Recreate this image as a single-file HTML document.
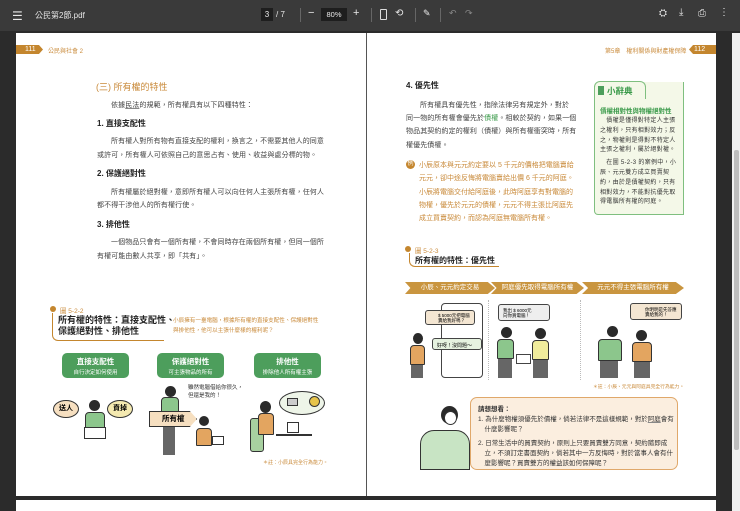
<!DOCTYPE html>
<html><head><meta charset="utf-8"><style>
*{margin:0;padding:0;box-sizing:border-box}
body{width:740px;height:511px;overflow:hidden;background:#2b2b2b;font-family:"Liberation Sans","Noto Sans CJK TC",sans-serif;position:relative}
.a{position:absolute;white-space:nowrap}
.tb{position:absolute;left:0;top:0;width:740px;height:31px;background:#3a3a3a;color:#e8e8e8}
.pg{position:absolute;background:#fff}
.t{font-size:7px;color:#444;letter-spacing:0.1px}
.h{font-size:8px;font-weight:bold;color:#222}
.o{color:#c98a3a}
.g{background:#4d9e5c;color:#fff;border-radius:5px;text-align:center;position:absolute}
.hd{position:absolute;border-radius:50%;background:#2a2a2a}
.bd{position:absolute;border-radius:4px 4px 1px 1px;border:1px solid #333}
.arr{position:absolute;height:12px;background:#c9953f;color:#fff;font-size:6.5px;line-height:12px;text-align:center;clip-path:polygon(0 0,92% 0,100% 50%,92% 100%,0 100%,6% 50%)}
u{text-decoration:underline;text-decoration-color:#888}
</style></head><body>
<div class="tb">
 <div class="a" style="left:12px;top:9px;font-size:12px">☰</div>
 <div class="a" style="left:35px;top:10px;font-size:8px">公民第2節.pdf</div>
 <div class="a" style="left:261px;top:8px;width:12px;height:13px;background:#1e1e1e;font-size:8px;text-align:center;line-height:13px">3</div>
 <div class="a" style="left:276px;top:10px;font-size:8px">/ 7</div>
 <div class="a" style="left:300px;top:8px;width:1px;height:14px;background:#666"></div>
 <div class="a" style="left:308px;top:7px;font-size:11px">−</div>
 <div class="a" style="left:321px;top:8px;width:26px;height:13px;background:#1e1e1e;font-size:7.5px;text-align:center;line-height:13px">80%</div>
 <div class="a" style="left:353px;top:7px;font-size:11px">+</div>
 <div class="a" style="left:371px;top:8px;width:1px;height:14px;background:#666"></div>
 <div class="a" style="left:380px;top:9px;width:7px;height:11px;border:1px solid #ddd;border-radius:1px"></div>
 <div class="a" style="left:395px;top:8px;font-size:10px">⟲</div>
 <div class="a" style="left:415px;top:8px;width:1px;height:14px;background:#666"></div>
 <div class="a" style="left:423px;top:8px;font-size:9px">✎</div>
 <div class="a" style="left:440px;top:8px;width:1px;height:14px;background:#666"></div>
 <div class="a" style="left:449px;top:8px;font-size:9px;color:#888">↶</div>
 <div class="a" style="left:465px;top:8px;font-size:9px;color:#888">↷</div>
 <div class="a" style="left:659px;top:8px;font-size:10px">⛭</div>
 <div class="a" style="left:679px;top:7px;font-size:10px">⤓</div>
 <div class="a" style="left:698px;top:8px;font-size:10px">⎙</div>
 <div class="a" style="left:719px;top:7px;font-size:10px">⋮</div>
</div>
<div class="a" style="left:732px;top:33px;width:8px;height:478px;background:#f0f0f0"></div>
<div class="a" style="left:734px;top:150px;width:5px;height:300px;background:#bdbdbd;border-radius:2px"></div>

<div class="pg" style="left:16px;top:33px;width:700px;height:463px"></div>
<div class="a" style="left:366px;top:33px;width:1px;height:463px;background:#555"></div>
<div class="pg" style="left:16px;top:500px;width:700px;height:11px"></div>

<!-- headers -->
<div class="a" style="left:16px;top:45px;width:27px;height:9px;background:#c4862e;clip-path:polygon(0 0,85% 0,100% 50%,85% 100%,0 100%);color:#fff;font-size:7px;line-height:9px;padding-left:9px">111</div>
<div class="a o" style="left:48px;top:46px;font-size:6px">公民與社會 2</div>
<div class="a o" style="left:605px;top:46px;font-size:6px">第5章　權利關係與財產權保障</div>
<div class="a" style="left:689px;top:45px;width:27px;height:9px;background:#c4862e;clip-path:polygon(15% 0,100% 0,100% 100%,15% 100%,0 50%);color:#fff;font-size:7px;line-height:9px;padding-left:5px">112</div>

<!-- left page text -->
<div class="a o" style="left:96px;top:80px;font-size:9px">(三) 所有權的特性</div>
<div class="a t" style="left:111px;top:100px">依據<u>民法</u>的規範，所有權具有以下四種特性：</div>
<div class="a h" style="left:97px;top:118px">1. 直接支配性</div>
<div class="a t" style="left:111px;top:136px">所有權人對所有物有直接支配的權利，換言之，不需要其他人的同意</div>
<div class="a t" style="left:97px;top:150px">或許可，所有權人可依照自己的意思占有、使用、收益與處分標的物。</div>
<div class="a h" style="left:97px;top:168px">2. 保護絕對性</div>
<div class="a t" style="left:111px;top:187px">所有權屬於絕對權，意即所有權人可以向任何人主張所有權，任何人</div>
<div class="a t" style="left:97px;top:200px">都不得干涉他人的所有權行使。</div>
<div class="a h" style="left:97px;top:219px">3. 排他性</div>
<div class="a t" style="left:111px;top:237px">一個物品只會有一個所有權，不會同時存在兩個所有權，但同一個所</div>
<div class="a t" style="left:97px;top:251px">有權可能由數人共享，即「共有」。</div>

<!-- fig 5-2-2 -->
<div class="a" style="left:50px;top:306px;width:6px;height:6px;border-radius:50%;background:#c4862e"></div>
<div class="a o" style="left:60px;top:305px;font-size:6.5px">圖 5-2-2</div>
<div class="a" style="left:58px;top:315px;font-size:9px;font-weight:bold;color:#222;line-height:11px">所有權的特性：直接支配性、<br>保護絕對性、排他性</div>
<div class="a" style="left:52px;top:313px;width:112px;height:28px;border-left:1px solid #c4862e;border-bottom:1px solid #c4862e;border-radius:0 0 0 6px"></div>
<div class="a o" style="left:173px;top:316px;font-size:5.6px;line-height:10px">小辰擁有一臺電腦，根據所有權的直接支配性、保護絕對性<br>與排他性，他可以主張什麼樣的權利呢？</div>
<div class="g" style="left:62px;top:353px;width:67px;height:25px;font-size:7.5px;font-weight:bold;padding-top:3px">直接支配性<div style="font-size:5.5px;font-weight:normal;margin-top:1px">自行決定如何使用</div></div>
<div class="g" style="left:157px;top:353px;width:67px;height:25px;font-size:7.5px;font-weight:bold;padding-top:3px">保護絕對性<div style="font-size:5.5px;font-weight:normal;margin-top:1px">可主張物品的所有</div></div>
<div class="g" style="left:254px;top:353px;width:67px;height:25px;font-size:7.5px;font-weight:bold;padding-top:3px">排他性<div style="font-size:5.5px;font-weight:normal;margin-top:1px">排除他人所有權主張</div></div>
<!-- illus 1 -->
<div class="a" style="left:53px;top:400px;width:26px;height:18px;border-radius:50%;background:#f6dfc0;border:1px solid #333;font-size:7px;font-weight:bold;text-align:center;line-height:16px">送人</div>
<div class="a" style="left:107px;top:400px;width:26px;height:18px;border-radius:50%;background:#f4e9b0;border:1px solid #333;font-size:7px;font-weight:bold;text-align:center;line-height:16px">賣掉</div>
<div class="hd" style="left:89px;top:400px;width:11px;height:11px"></div>
<div class="bd" style="left:85px;top:412px;width:20px;height:20px;background:#8cc68c"></div>
<div class="a" style="left:84px;top:427px;width:22px;height:12px;background:#fff;border:1px solid #333"></div>
<!-- illus 2 -->
<div class="a o" style="left:188px;top:384px;font-size:5.5px;color:#333;line-height:8px">雖然電腦借給你很久，<br>但還是我的！</div>
<div class="hd" style="left:165px;top:386px;width:11px;height:11px"></div>
<div class="bd" style="left:161px;top:397px;width:18px;height:24px;background:#8cc68c"></div>
<div class="a" style="left:149px;top:411px;width:48px;height:16px;background:#f6dfc0;border:1px solid #333;clip-path:polygon(0 0,85% 0,100% 50%,85% 100%,0 100%);font-size:7.5px;font-weight:bold;line-height:14px;padding-left:12px">所有權</div>
<div class="a" style="left:163px;top:427px;width:12px;height:28px;background:#666"></div>
<div class="hd" style="left:199px;top:416px;width:10px;height:10px"></div>
<div class="bd" style="left:196px;top:428px;width:16px;height:18px;background:#e3a560"></div>
<div class="a" style="left:212px;top:436px;width:12px;height:9px;background:#fff;border:1px solid #333"></div>
<!-- illus 3 -->
<div class="a" style="left:279px;top:391px;width:46px;height:24px;border-radius:50%;border:1px solid #333;background:#eef5e8"></div>
<div class="a" style="left:287px;top:398px;width:11px;height:8px;border:1px solid #333;background:#ccc"></div>
<div class="a" style="left:309px;top:396px;width:11px;height:11px;border-radius:50%;background:#e6c44a;border:1px solid #333"></div>
<div class="a" style="left:250px;top:418px;width:14px;height:34px;background:#a8d0a0;border:1px solid #333;border-radius:3px"></div>
<div class="hd" style="left:260px;top:401px;width:11px;height:12px"></div>
<div class="bd" style="left:258px;top:413px;width:16px;height:22px;background:#e3a560"></div>
<div class="a" style="left:276px;top:434px;width:36px;height:2px;background:#333"></div>
<div class="a" style="left:287px;top:422px;width:12px;height:11px;background:#fff;border:1px solid #333"></div>
<div class="a o" style="left:263px;top:459px;font-size:5px">＊註：小辰具完全行為能力。</div>

<!-- right page -->
<div class="a h" style="left:406px;top:80px">4. 優先性</div>
<div class="a t" style="left:420px;top:100px">所有權具有優先性，指除法律另有規定外，對於</div>
<div class="a t" style="left:406px;top:113px">同一物的所有權會優先於<span style="color:#3a9a4a">債權</span>。相較於契約，如果一個</div>
<div class="a t" style="left:406px;top:126px">物品其契約約定的權利（債權）與所有權衝突時，所有</div>
<div class="a t" style="left:406px;top:140px">權優先債權。</div>
<div class="a" style="left:406px;top:160px;width:9px;height:9px;border-radius:50%;background:#c4862e;color:#fff;font-size:6px;text-align:center;line-height:9px">例</div>
<div class="a o" style="left:419px;top:159px;font-size:7px;line-height:13.3px">小辰原本與元元約定要以 5 千元的價格把電腦賣給<br>元元，卻中途反悔將電腦賣給出價 6 千元的阿庭。<br>小辰將電腦交付給阿庭後，此時阿庭享有對電腦的<br>物權，優先於元元的債權，元元不得主張比阿庭先<br>成立買賣契約，而認為阿庭無電腦所有權。</div>
<!-- dictionary -->
<div class="a" style="left:594px;top:82px;width:90px;height:133px;background:#f4f8e8;border:1px solid #7fbf7f;border-radius:6px 0 0 4px;border-top:none"></div>
<div class="a" style="left:594px;top:81px;width:52px;height:18px;border:1px solid #7fbf7f;border-bottom:none;border-radius:6px 6px 0 0;background:#f4f8e8"></div>
<div class="a" style="left:598px;top:86px;width:6px;height:9px;background:#4d9e5c"></div>
<div class="a" style="left:607px;top:85px;font-size:8.5px;font-weight:bold;color:#3a9a4a">小辭典</div>
<div class="a" style="left:600px;top:105px;font-size:6.5px;font-weight:bold;color:#3a9a4a">債權相對性與物權絕對性</div>
<div class="a" style="left:600px;top:117px;font-size:6px;color:#333;line-height:9.8px;white-space:normal;width:79px;letter-spacing:0.3px">　債權是僅得對特定人主張之權利，只有相對效力；反之，物權則是得對不特定人主張之權利，屬於絕對權。<div style="height:3px"></div>　在圖 5-2-3 的案例中，小辰、元元雙方成立買賣契約，由於是債權契約，只有相對效力，不能對抗優先取得電腦所有權的阿庭。</div>
<!-- fig 5-2-3 -->
<div class="a" style="left:405px;top:246px;width:6px;height:6px;border-radius:50%;background:#c4862e"></div>
<div class="a o" style="left:415px;top:245px;font-size:6.5px">圖 5-2-3</div>
<div class="a" style="left:415px;top:255px;font-size:8px;font-weight:bold;color:#222">所有權的特性：優先性</div>
<div class="a" style="left:409px;top:253px;width:90px;height:14px;border-left:1px solid #c4862e;border-bottom:1px solid #c4862e;border-radius:0 0 0 6px"></div>
<div class="arr" style="left:405px;top:282px;width:90px">小辰、元元約定交易</div>
<div class="arr" style="left:491px;top:282px;width:93px">阿庭優先取得電腦所有權</div>
<div class="arr" style="left:582px;top:282px;width:102px">元元不得主張電腦所有權</div>
<div class="a" style="left:441px;top:303px;width:42px;height:75px;border:1.5px solid #444;border-radius:4px"></div>
<div class="a" style="left:425px;top:310px;width:50px;height:15px;background:#f4e6d2;border:1px solid #444;border-radius:3px;font-size:4.5px;padding:2px 0 0 12px;line-height:5px">$ 5000元把電腦<br>賣給我好嗎？</div>
<div class="a" style="left:432px;top:338px;width:50px;height:12px;background:#e6f2e0;border:1px solid #444;border-radius:3px;font-size:5px;padding:3px 0 0 4px">好呀！沒問題～</div>
<div class="hd" style="left:413px;top:333px;width:10px;height:11px"></div>
<div class="bd" style="left:410px;top:345px;width:15px;height:20px;background:#e3a560"></div>
<div class="a" style="left:411px;top:365px;width:12px;height:13px;background:#666"></div>
<div class="a" style="left:488px;top:300px;width:1px;height:80px;border-left:1px dotted #bbb"></div>
<div class="a" style="left:498px;top:304px;width:52px;height:17px;background:#eee;border:1px solid #444;border-radius:3px;font-size:4.5px;padding:3px 0 0 4px;line-height:5px">我出 $ 6000元<br>向你買電腦！</div>
<div class="hd" style="left:501px;top:327px;width:11px;height:11px"></div>
<div class="bd" style="left:497px;top:339px;width:17px;height:20px;background:#8cc68c"></div>
<div class="a" style="left:498px;top:359px;width:14px;height:19px;background:#666"></div>
<div class="a" style="left:516px;top:354px;width:15px;height:10px;background:#fff;border:1px solid #444"></div>
<div class="hd" style="left:535px;top:328px;width:11px;height:11px"></div>
<div class="bd" style="left:532px;top:340px;width:17px;height:20px;background:#f0ec9c"></div>
<div class="a" style="left:533px;top:360px;width:15px;height:18px;background:#666"></div>
<div class="a" style="left:580px;top:300px;width:1px;height:80px;border-left:1px dotted #bbb"></div>
<div class="a" style="left:630px;top:303px;width:52px;height:17px;background:#f4e6d2;border:1px solid #444;border-radius:3px;font-size:4.5px;padding:3px 0 0 14px;line-height:5px">你明明是先答應<br>賣給我的！</div>
<div class="hd" style="left:607px;top:326px;width:11px;height:11px"></div>
<div class="bd" style="left:598px;top:339px;width:24px;height:22px;background:#8cc68c"></div>
<div class="a" style="left:600px;top:361px;width:18px;height:17px;background:#666"></div>
<div class="hd" style="left:636px;top:330px;width:11px;height:11px"></div>
<div class="bd" style="left:632px;top:342px;width:20px;height:20px;background:#e3a560"></div>
<div class="a" style="left:634px;top:362px;width:16px;height:16px;background:#666"></div>
<div class="a o" style="left:593px;top:383px;font-size:4.8px">＊註：小辰、元元與阿庭具完全行為能力。</div>
<!-- think box -->
<div class="a" style="left:470px;top:397px;width:208px;height:73px;background:#fbeedf;border:1px solid #e0a86a;border-radius:7px"></div>
<div class="a" style="left:478px;top:403px;font-size:6.5px;font-weight:bold;color:#333">請想想看：</div>
<div class="a" style="left:478px;top:415px;font-size:6.5px;color:#333;line-height:10px">1. 為什麼物權須優先於債權，倘若法律不是這樣規範，對於<u>阿庭</u>會有<br>　什麼影響呢？</div>
<div class="a" style="left:478px;top:439px;font-size:6.5px;color:#333;line-height:10px">2. 日常生活中的買賣契約，原則上只要買賣雙方同意，契約隨即成<br>　立，不須訂定書面契約，倘若其中一方反悔時，對於當事人會有什<br>　麼影響呢？買賣雙方的權益該如何保障呢？</div>
<div class="hd" style="left:441px;top:406px;width:17px;height:18px"></div>
<div class="a" style="left:444px;top:411px;width:13px;height:14px;border-radius:50%;background:#fff;border:1px solid #333"></div>
<div class="a" style="left:420px;top:430px;width:50px;height:40px;background:#c8e4c4;border:1px solid #333;border-radius:14px 14px 0 0"></div>
</body></html>
